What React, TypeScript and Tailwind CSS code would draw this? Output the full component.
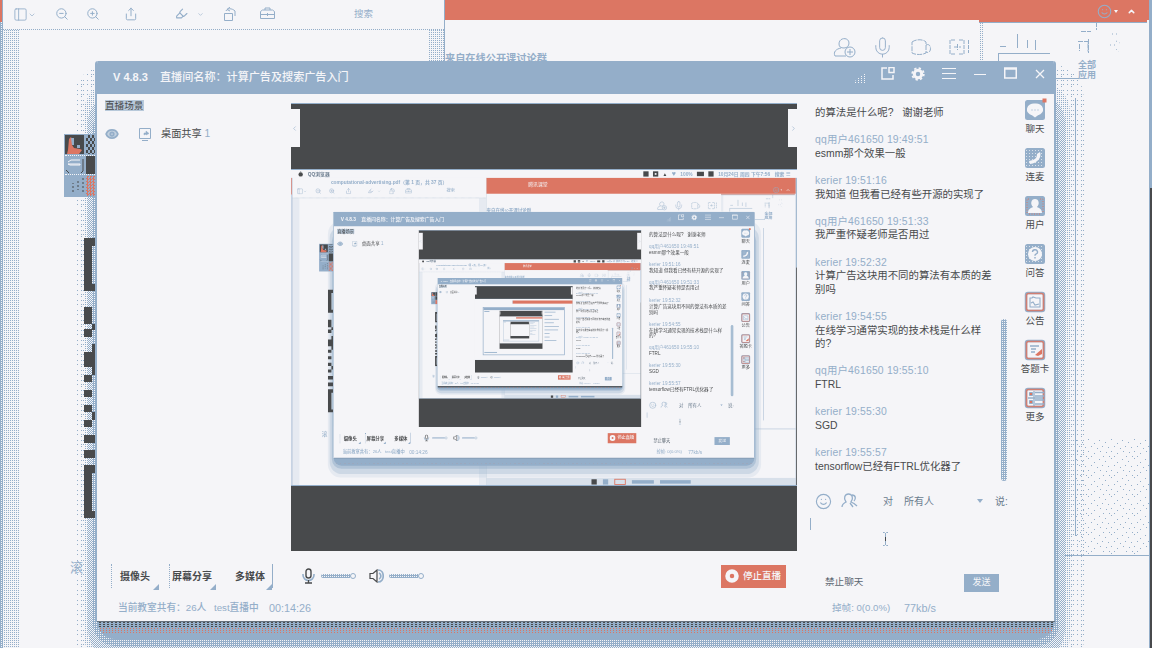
import React from "react";
import {
  ChevronDown, ChevronLeft, ChevronRight, ChevronUp, Eye, Highlighter,
  Mic, PanelLeft, Share, Smile, ZoomIn, ZoomOut,
} from "lucide-react";

const MESSAGES: { from?: string; lines: string[] }[] = [
  { lines: ["的算法是什么呢?   谢谢老师"] },
  { from: "qq用户461650 19:49:51", lines: ["esmm那个效果一般"] },
  { from: "kerier 19:51:16", lines: ["我知道 但我看已经有些开源的实现了"] },
  { from: "qq用户461650 19:51:33", lines: ["我严重怀疑老师是否用过"] },
  { from: "kerier 19:52:32", lines: ["计算广告这块用不同的算法有本质的差", "别吗"] },
  { from: "kerier 19:54:55", lines: ["在线学习通常实现的技术栈是什么样", "的?"] },
  { from: "qq用户461650 19:55:10", lines: ["FTRL"] },
  { from: "kerier 19:55:30", lines: ["SGD"] },
  { from: "kerier 19:55:57", lines: ["tensorflow已经有FTRL优化器了"] },
];

type Tones = { sparse: string; quarter: string; half: string; dense: string };

const FULL: Tones = {
  sparse: "bg-[conic-gradient(#94aec9_0_25%,transparent_0)] bg-[length:5px_5px] [mask-image:conic-gradient(#000_0_25%,transparent_0)] [mask-size:2px_2px]",
  quarter: "bg-[conic-gradient(#94aec9_0_25%,transparent_0)] bg-[length:2px_2px]",
  half: "bg-[repeating-conic-gradient(#94aec9_0_25%,#f5f5f8_0_50%)] bg-[length:2px_2px]",
  dense: "bg-[#94aec9] bg-[image:conic-gradient(#f5f5f8_0_25%,transparent_0)] bg-[length:2px_2px]",
};

const SMALL: Tones = {
  sparse: "",
  quarter: "bg-[#94aec9]/15",
  half: "bg-[#94aec9]/30",
  dense: "bg-[#94aec9]/50",
};

const tones = (depth: number) => (depth === 0 ? FULL : SMALL);

function RailGlyph({ kind }: { kind: number }) {
  return (
    <svg width="20" height="20" viewBox="0 0 20 20" fill="none" overflow="visible">
      {kind < 4 ? (
        <rect width="20" height="20" rx="2.5" fill="#94aec9" />
      ) : (
        <rect x="1" y="1" width="18" height="18" rx="2" fill="#f5f5f8" stroke="#94aec9" strokeWidth="2.5" />
      )}
      {kind >= 4 && <rect x="1.5" y="1.5" width="17" height="17" rx="2" stroke="#dc7663" strokeWidth="1.6" strokeOpacity=".85" />}
      {kind === 0 && (
        <g>
          <path d="M10 3.500a7 6 0 0 1 3 11.700L10 17.500l-3-2.300A7 6 0 0 1 10 3.500Z" fill="#f5f5f8" />
          <path d="M6.5 10h1M9.5 10h1M12.5 10h1" stroke="#94aec9" strokeWidth="1.2" />
          <rect x="17.500" y="-1.500" width="4" height="4" fill="#dc7663" />
        </g>
      )}
      {(kind === 1 || kind === 3) && (
        <path d="M1 2.500h18M1 5.500h18M1 8.500h18M1 11.500h18M1 14.500h18M1 17.500h18" stroke="#f5f5f8" strokeDasharray="1 2" strokeOpacity=".7" />
      )}
      {kind === 1 && <path d="M15 4c2 5-2 11-10 12l-1-3 4-1c3-1 4-3 4-6Z" fill="#f5f5f8" />}
      {kind === 2 && (
        <g>
          <path d="M3 17c0-4 3-5 5-6-3-3-2-8 2-8s5 5 2 8c2 1 5 2 5 6Z" fill="#f5f5f8" />
          <path d="M2 17V3h3M15 3h3v14M4 18h12" stroke="#dc7663" strokeWidth=".9" strokeDasharray="1 1.5" />
        </g>
      )}
      {kind === 3 && (
        <g>
          <circle cx="10" cy="10" r="7" fill="#f5f5f8" />
          <path d="M7.5 8a2.5 2.3 0 1 1 3.4 2.2c-.7.3-.9.8-.9 1.6M10 13v1.4" stroke="#94aec9" strokeWidth="1.4" />
        </g>
      )}
      {kind === 4 && <path d="M5 6h2l1-1 3 1h4v9H5ZM6 11l2-1 2 3 4-1" stroke="#94aec9" strokeWidth="1.1" />}
      {kind === 5 && (
        <g>
          <path d="M5 6h9M6 9h5M6 12h4" stroke="#94aec9" strokeWidth="1.3" />
          <path d="m10 15 7-6v5l-4 2Z" fill="#dc7663" />
        </g>
      )}
      {kind === 6 && (
        <g>
          <path d="M4.500 4.500h3v3h-3ZM4.500 12.500h3v3h-3Z" fill="#dc7663" stroke="#94aec9" />
          <path d="M10 4.500h9M10 8h9M10 12h9M10 16h9M3 10h15M9 3v15" stroke="#94aec9" strokeWidth="1.300" />
        </g>
      )}
    </svg>
  );
}

const RAIL = ["聊天", "连麦", "用户", "问答", "公告", "答题卡", "更多"];

function Slider({ depth }: { depth: number }) {
  return (
    <div className="flex w-[35px] items-center">
      <div className={"h-[4px] flex-1 rounded-l-full " + (depth ? "bg-[#94aec9]/60" : FULL.dense)} />
      <div className="size-[6px] rounded-full border border-[#94aec9] bg-[#f5f5f8]" />
    </div>
  );
}

function Corner() {
  return (
    <svg width="6" height="6" className="absolute right-0 -bottom-[2px]">
      <path d="M6 0v6H0Z" fill="#94aec9" />
    </svg>
  );
}

function TitleBar() {
  return (
    <div className="flex h-[33px] shrink-0 items-center bg-[#94aec9] pl-[16px] text-[#f5f5f8]">
      <span className="w-[47px] text-[11px] font-bold whitespace-nowrap">V 4.8.3</span>
      <span className="flex-1 text-[11.1px] font-medium whitespace-nowrap">直播间名称：计算广告及搜索广告入门</span>
      <div className="flex h-full w-[202px] items-start pt-[6px]">
        <svg width="10" height="10" viewBox="0 0 10 10" className="mt-[6px] ml-[3px]">
          <path d="M.5 10V7.500M3.500 10V5M6.500 10V3M9.500 10V0" stroke="#f5f5f8" strokeDasharray="1 1" />
        </svg>
        <svg width="14" height="14" viewBox="0 0 14 14" className="ml-[16px]" fill="none" stroke="#f5f5f8" strokeWidth="1.5">
          <path d="M6 1H1v11h11V8" />
          <path d="M8 .5h5v5H8Z" />
        </svg>
        <svg width="14" height="14" viewBox="0 0 14 14" className="ml-[16px]" fill="none" stroke="#f5f5f8">
          <circle cx="7" cy="7" r="3.700" strokeWidth="3" />
          <circle cx="7" cy="7" r="5.800" strokeWidth="1.800" strokeDasharray="2.300 2.250" />
        </svg>
        <svg width="15" height="14" viewBox="0 0 15 14" className="ml-[17px]">
          <path d="M0 1.500h14M0 6.500h14M0 11.500h14" stroke="#f5f5f8" strokeWidth="1.2" />
        </svg>
        <svg width="12" height="14" viewBox="0 0 12 14" className="ml-[17px]">
          <path d="M0 7.500h12" stroke="#f5f5f8" strokeWidth="1.2" />
        </svg>
        <svg width="13" height="13" viewBox="0 0 13 13" className="ml-[18px]" fill="none">
          <path d="M.75 1v10h11.500V1ZM0 2h13" stroke="#f5f5f8" strokeWidth="1.5" />
        </svg>
        <svg width="10" height="14" viewBox="0 0 10 14" className="ml-[18px]">
          <path d="m1 3 8 8M9 3l-8 8" stroke="#f5f5f8" strokeWidth="1.3" />
        </svg>
      </div>
    </div>
  );
}

function Chat({ depth }: { depth: number }) {
  return (
    <div className="flex w-[217px] shrink-0 flex-col">
      <div className="flex h-[393px] shrink-0">
        <div className="flex flex-1 flex-col gap-[13.62px] pt-[12px] pl-[18px] text-[10.4px] leading-[13.6px] whitespace-pre">
          {MESSAGES.map((m, i) => (
            <div key={i} className="w-[184px]">
              {m.from && <div className="tracking-[0.18px] text-[#94aec9]">{m.from}</div>}
              {m.lines.map((l) => (
                <div key={l} className="text-[#484a4c]">{l}</div>
              ))}
            </div>
          ))}
        </div>
        <div className={"mt-[225px] mr-[7px] h-[162px] w-[6px] rounded-full " + (depth ? "bg-[#a7bdd2]" : FULL.dense)} />
      </div>
      <div className="flex h-[28px] shrink-0 items-center pl-[18px] text-[10px] text-[#6b7c8e]">
        <Smile size={17} strokeWidth={1.6} color="#94aec9" />
        <svg width="17" height="16" viewBox="0 0 17 16" className="ml-[9px]" fill="none" stroke="#94aec9" strokeWidth="1.300">
          <path d="M1 14c0-3 2-4 4-5C2 5 4 1 7.500 1S13 5 10 9c3 1 4 2 6 4" />
          <path d="M11 2c4 0 4 4 2 6M9 10l3 4" />
        </svg>
        <span className="ml-[25px]">对</span>
        <span className="ml-[11px] w-[73px]">所有人</span>
        <svg width="6" height="4"><path d="M0 0h6L3 4Z" fill="#94aec9" /></svg>
        <span className="ml-[12px] whitespace-nowrap">说:</span>
      </div>
      <div className="flex flex-1 pt-[3px] pl-[13px]">
        <div className="h-[12px] w-px bg-[#94aec9]" />
        <svg width="7" height="14" viewBox="0 0 7 14" className="mt-[14px] ml-[71px]">
          <path d="M1 .5h1.500l1 1 1-1H6M3.500 1v12M1 13.500h1.500l1-1 1 1H6" fill="none" stroke="#94aec9" />
          <path d="M3.500 5v4" stroke="#484a4c" />
        </svg>
      </div>
      <div className="flex h-[29px] shrink-0 items-center pr-[15px] pl-[28px] text-[9.6px]">
        <span className="flex-1 text-[#5b6671]">禁止聊天</span>
        <span className="flex h-[18px] w-[35px] items-center justify-center bg-[#94aec9] text-[9px] text-[#f5f5f8]">发送</span>
      </div>
      <div className="flex h-[24px] shrink-0 items-center pb-[2px] pl-[35px] text-[9.6px] text-[#94aec9]">
        <span className="w-[72px] whitespace-nowrap">掉帧: 0(0.0%)</span>
        <span className="text-[10.8px]">77kb/s</span>
      </div>
    </div>
  );
}

function Stage({ depth }: { depth: number }) {
  return (
    <div className="mt-[9px] flex h-[448px] w-[506px] shrink-0 flex-col bg-[#484a4c]">
      <div className="flex h-[67px] shrink-0 items-start justify-between border-y border-[#94aec9] pt-[5px]">
        <div className="flex h-[38px] w-[9px] items-center bg-[#f5f5f8]"><ChevronLeft size={7} color="#94aec9" /></div>
        <div className="flex h-[38px] w-[9px] items-center justify-end bg-[#f5f5f8]"><ChevronRight size={7} color="#94aec9" /></div>
      </div>
      <div className="h-[316px] w-[506px] shrink-0 overflow-hidden border-b border-[#94aec9] bg-[#f5f5f8]">
        {depth < 4 && (
          <div className="h-[719px] w-[1152px] origin-top-left scale-[0.4393]">
            {depth < 2 ? <Desktop depth={depth + 1} /> : <Thumbnail depth={depth + 1} />}
          </div>
        )}
      </div>
    </div>
  );
}

function Thumbnail({ depth }: { depth: number }) {
  return (
    <div className="flex h-[719px] w-[1152px] flex-col bg-[#f5f5f8]">
      <div className="mt-[18px] flex h-[37px]">
        <div className="w-[445px] border-r-4 border-[#94aec9]" />
        <div className="flex-1 bg-[#dc7663]" />
      </div>
      <div className="mx-[92px] mt-[40px] flex h-[568px] flex-col border-8 border-[#94aec9] bg-[#f5f5f8]">
        <div className="h-[28px] shrink-0 bg-[#94aec9]" />
        <div className="flex flex-1">
          <div className="flex w-[190px] flex-col justify-between pb-[20px] pl-[10px]">
            <div className="mt-[12px] h-[10px] w-[60px] bg-[#94aec9]" />
            <div className="h-[10px] w-[150px] bg-[#94aec9]" />
          </div>
          <Stage depth={depth} />
          <div className="flex flex-1 flex-col gap-[34px] pt-[20px] pl-[24px]">
            {[130, 90, 170, 110, 170, 160, 60, 60, 140].map((w, i) => (
              <div key={i} className="h-[8px] bg-[#94aec9]" style={{ width: w }} />
            ))}
          </div>
        </div>
      </div>
    </div>
  );
}

function Broadcaster({ depth }: { depth: number }) {
  return (
    <div className="flex h-[560px] w-[961px] flex-col overflow-hidden rounded-t-[3px] border-x-2 border-[#94aec9] bg-[#f5f5f8]">
      <TitleBar />
      <div className="flex min-h-0 flex-1">
        <div className="flex w-[700px] shrink-0 flex-col">
          <div className="flex h-[457px] shrink-0">
            <div className="w-[194px] shrink-0 pt-[6px] pl-[8px]">
              <div className="w-[39px] bg-[#b8c9da] text-[9.6px] leading-[11px] whitespace-nowrap text-[#484a4c]">直播场景</div>
              <div className="mt-[15px] flex h-[16px] items-center text-[10.2px]">
                <Eye size={14} strokeWidth={3} color="#94aec9" fill="#c4d2e0" />
                <svg width="12" height="13" viewBox="0 0 12 13" className="ml-[20px]" fill="none" stroke="#94aec9">
                  <path d="M.5.500h11v10H.5ZM3 12.500h6" />
                  <path d="M5 7V5h2V3l3 2.500L7 7V6Z" fill="#94aec9" strokeWidth=".5" />
                </svg>
                <span className="ml-[10px] text-[#484a4c]">桌面共享 <span className="text-[#94aec9]">1</span></span>
              </div>
            </div>
            <Stage depth={depth} />
          </div>
          <div className="flex h-[46px] shrink-0 items-center pt-[4px] pl-[14px] text-[10px] font-bold text-[#484a4c]">
            <div className="relative flex h-[24px] w-[48px] items-center border-l border-dotted border-[#94aec9] pl-[8px] whitespace-nowrap">摄像头<Corner /></div>
            <div className="relative ml-[10px] flex h-[24px] w-[47px] items-center border-l border-dotted border-[#94aec9] pl-[2px] whitespace-nowrap">屏幕分享<Corner /></div>
            <div className="relative flex h-[24px] w-[57px] items-center border-r border-[#94aec9] pl-[19px] whitespace-nowrap">多媒体<Corner /></div>
            <svg width="13" height="16" viewBox="0 0 13 16" className="ml-[29px]" fill="none">
              <path d="M1 6v1a5 5 0 0 0 11 0V6" stroke="#94aec9" strokeWidth="1.600" />
              <rect x="4" y="1" width="5" height="9" rx="2.500" stroke="#484a4c" strokeWidth="1.400" />
              <path d="M6.500 12v3M3 15h7" stroke="#484a4c" strokeWidth="1.300" />
            </svg>
            <div className="ml-[6px]"><Slider depth={depth} /></div>
            <svg width="15" height="14" viewBox="0 0 15 14" className="ml-[13px]" fill="none">
              <path d="M9 1c7 0 7 12 0 12M10 4c2.500 1 2.500 5 0 6" stroke="#94aec9" strokeWidth="1.700" />
              <path d="M1 4.500h3L8 1v12L4 9.500H1Z" stroke="#484a4c" strokeWidth="1.200" />
            </svg>
            <div className="ml-[5px]"><Slider depth={depth} /></div>
            <div className="ml-auto mr-[11px] flex h-[23px] w-[65px] items-center bg-[#dc7663] pl-[4px] text-[9.5px] font-medium text-[#f5f5f8]">
              <svg width="14" height="14"><circle cx="7" cy="7" r="4.500" fill="none" stroke="#f5f5f8" strokeWidth="4.500" /></svg>
              <span className="ml-[4px] whitespace-nowrap">停止直播</span>
            </div>
          </div>
          <div className="flex h-[24px] items-center pb-[2px] pl-[21px] text-[9.7px] font-medium whitespace-nowrap text-[#94aec9]">
            <span className="w-[96px]">当前教室共有：26人</span>
            <span className="w-[55px]">test直播中</span>
            <span className="text-[10.8px]">00:14:26</span>
          </div>
        </div>
        <Chat depth={depth} />
        <div className="flex flex-1 flex-col items-center pt-[6px] pl-[2px]">
          {RAIL.map((label, i) => (
            <div key={label} className="flex h-[48px] flex-col items-center">
              <RailGlyph kind={i} />
              <span className="mt-[2px] text-[9.5px] leading-[14px] whitespace-nowrap text-[#484a4c]">{label}</span>
            </div>
          ))}
        </div>
      </div>
    </div>
  );
}

function MenuBar() {
  return (
    <div className="flex h-[18px] items-center gap-[10px] bg-[#f5f5f8] pr-[16px] pl-[16px] text-[11px] text-[#484a4c]">
      <svg width="12" height="14"><circle cx="6" cy="8" r="5" fill="#484a4c" /><path d="M6 3V0" stroke="#484a4c" /></svg>
      <span className="font-bold text-[#6b7c8e]">QQ浏览器</span>
      <span className="ml-auto size-[12px] bg-[#484a4c]" />
      <span className="size-[12px] border-4 border-[#484a4c]" />
      <span>▲</span><span className="text-[16px] text-[#94aec9]">♥</span>
      <span className="font-bold text-[#94aec9]">100%</span>
      <span className="h-[10px] w-[16px] bg-[#484a4c]" />
      <span className="h-[12px] w-[12px] bg-[#484a4c]" />
      <span className="font-bold text-[#94aec9]">10月24日 周四 下午7:56</span>
      <span className="font-bold text-[#94aec9]">搜索 ☰</span>
    </div>
  );
}

function PdfReader({ depth }: { depth: number }) {
  return (
    <div className="flex h-[700px] w-[443px] shrink-0 flex-col border-x border-[#94aec9] bg-[#f5f5f8]">
      <div className="flex h-[23px] shrink-0 items-center justify-center text-[11px] font-bold text-[#94aec9]">
        {depth > 0 && "computational-advertising.pdf（第 1 页，共 37 页）"}
      </div>
      <div className="flex h-[23px] shrink-0 items-start border-b border-dotted border-[#94aec9] pl-[10px] text-[#94aec9]">
        <PanelLeft size={15} strokeWidth={1.400} /><ChevronDown size={8} className="mt-[4px]" />
        <ZoomOut size={14} strokeWidth={1.700} className="ml-[19px]" />
        <ZoomIn size={14} strokeWidth={1.700} className="ml-[17px]" />
        <Share size={14} strokeWidth={1.700} className="ml-[24px]" />
        <Highlighter size={13} strokeWidth={2} className="ml-[37px]" /><ChevronDown size={7} className="mt-[4px] ml-[9px]" />
        <svg width="13" height="14" viewBox="0 0 13 14" className="ml-[20px]" fill="none" stroke="currentColor">
          <path d="M.5 6.500h8v7h-8ZM2 4C3 1 8 1 11 4v5M6 0l-3 2.500L6 4" />
        </svg>
        <svg width="15" height="13" viewBox="0 0 15 13" className="ml-[23px]" fill="none" stroke="currentColor">
          <path d="M.5 4.500l2-1.500h10l2 1.500v7H.5ZM5 3V1h5v2M.5 7.500h14M7.500 6v3" />
        </svg>
        <span className="ml-auto mr-[71px] text-[9.5px] leading-[13px]">搜索</span>
      </div>
      <div className="flex flex-1">
        <div className={"w-[16px] " + tones(depth).quarter} />
        <div className="flex-1" />
        <div className={"w-[16px] " + tones(depth).quarter} />
      </div>
    </div>
  );
}

function MeetingBackdrop({ depth }: { depth: number }) {
  return (
    <div className="flex h-[700px] flex-1 flex-col bg-[#f5f5f8]">
      <div className="flex h-[36px] shrink-0 items-end bg-[#dc7663] text-[#94aec9]">
        <span className="mb-[14px] ml-[95px] text-[11px] text-[#f5f5f8]">{depth > 0 && "腾讯课堂"}</span>
        <Smile size={15} strokeWidth={1.700} className="mb-[1px] ml-auto" />
        <svg width="4" height="4" className="mb-[6px] ml-[2px]"><path d="M0 0h4L2 3Z" fill="#f5f5f8" /></svg>
        <ChevronUp size={9} strokeWidth={4} className="mr-[13px] mb-[4px] ml-[9px] text-[#f5f5f8]" />
      </div>
      <div className="flex h-[58px] shrink-0 items-start">
        <span className="mt-[31px] w-[388px] text-[10.2px] leading-[16px] font-bold whitespace-nowrap text-[#94aec9]">来自在线公开课讨论群</span>
        <div className="mt-[16px] flex items-center gap-[15px] text-[#94aec9]">
          <svg width="23" height="23" viewBox="0 0 23 23" fill="none" stroke="currentColor">
            <path d="M6 8c0-7 10-7 10-1 0 3-2 5-5 5s-5-1-5-4ZM13 20H2c-2-4 1-7 6-8" />
            <circle cx="17" cy="16" r="5" /><path d="M14 16h6M17 13v6" />
          </svg>
          <Mic size={23} strokeWidth={1} />
          <svg width="24" height="20" viewBox="0 0 24 20" fill="none" stroke="currentColor">
            <path d="M3 4c4-3 11-3 14 0v11c-4 2-10 2-14 0ZM17 7c6-3 6 10 0 7" strokeDasharray="5 1" />
          </svg>
          <svg width="23" height="20" viewBox="0 0 23 20" fill="none" stroke="currentColor">
            <path d="M7 2H2v14h5M11 2h5v14h-5M6 9h7M9.500 6v6M20.500 2v13" strokeDasharray="4 1" />
          </svg>
        </div>
        <div className={"mt-[3px] ml-[8px] h-[38px] w-[5px] " + tones(depth).quarter} />
        <svg width="66" height="42" viewBox="0 0 66 42" fill="none" stroke="#94aec9" overflow="visible" className="shrink-0">
          <path d="M-5 1h168" stroke="#dc7663" strokeWidth="2" />
          <path d="M-5 2.500h168" />
          <path d="M14 33.500h52M16 26.500h6M33.500 14v14M43.500 20v8M51.500 20v10M14.500 34v7" />
        </svg>
        <div className="mt-[12px] ml-[4px] flex w-[66px] shrink-0 flex-col items-center text-[9px] leading-[10px] font-bold text-[#94aec9]">
          <svg width="66" height="28" viewBox="0 0 66 28" fill="none" stroke="#94aec9" overflow="visible">
            <path d="M27 -.5h10M42.500-10v8M24 9.500h10v10M34.500 7v14M25.500 12v7" strokeDasharray="5 1" />
            <path d="M58 2h6M62 9l4 2M56 13h5M62 17l3 3" strokeDasharray="1 3" />
          </svg>
          <span>全部</span>
          <span>应用</span>
        </div>
      </div>
      <div className="ml-[610px] h-px w-[24px] shrink-0 bg-[#94aec9]" />
      <div className="flex h-[477px] shrink-0 justify-end border-b border-[#94aec9]">
        {depth === 0 && (
          <svg width="74" height="115" className="mt-[360px]" fill="#94aec9" shapeRendering="crispEdges">
            <defs>
              <pattern id="grain" width="23" height="19" patternUnits="userSpaceOnUse">
                <path d="M1 1h1v1h-1ZM7 3h1v1h-1ZM13 0h1v1h-1ZM19 4h1v1h-1ZM4 7h1v1h-1ZM10 8h1v1h-1ZM16 7h1v1h-1ZM22 9h1v1h-1ZM2 12h1v1h-1ZM8 13h1v1h-1ZM13 12h1v1h-1ZM19 14h1v1h-1ZM5 17h1v1h-1ZM11 17h1v1h-1ZM16 17h1v1h-1Z" />
              </pattern>
            </defs>
            <rect width="74" height="115" fill="url(#grain)" />
          </svg>
        )}
      </div>
      <div className="flex-1" />
      <div className={"flex h-[17px] items-center justify-center gap-[14px] " + tones(depth).half}>
        <div className="size-[12px] bg-[#484a4c]" />
        <div className="size-[12px] bg-[#94aec9]" />
        <div className="h-[14px] w-[26px] border-2 border-[#dc7663]" />
        <div className="h-[8px] w-[50px] bg-[#94aec9]" />
        <div className="h-[8px] w-[70px] bg-[#94aec9]" />
      </div>
    </div>
  );
}

function Avatars() {
  return (
    <div className="flex w-[34px] flex-col gap-px bg-[#94aec9] p-px">
      <div className="flex h-[19px] gap-[2px]">
        <svg width="19" height="19"><path d="M0 0h19v19H0Z" fill="#484a4c" /><path d="M4 4l2-2 2 4-1 4 2 3 6 1 2 1-3 4H2l1-4Z" fill="#dc7663" /><path d="M6 3h3v7H7ZM12 10h3v3h-3Z" fill="#94aec9" /></svg>
        <div className="w-[11px] bg-[repeating-conic-gradient(#484a4c_0_25%,#94aec9_0_50%)] bg-[length:4px_6px]" />
      </div>
      <div className="flex h-[20px] gap-[2px] border-y border-dotted border-[#f5f5f8]">
        <svg width="19" height="18"><path d="M3 6l3-2h9M3 8h12v1H5Z" fill="none" stroke="#f5f5f8" /><path d="M18 3v12l-2 2M1 14l3 3" fill="none" stroke="#484a4c" /></svg>
        <div className="w-[11px] bg-[#484a4c]" />
      </div>
      <div className="flex h-[20px] gap-[2px]">
        <svg width="19" height="20"><path d="M8 16V7M18 2v14M13 5v9" stroke="#484a4c" strokeDasharray="2 2" /></svg>
        <div className="w-[11px] bg-[repeating-conic-gradient(#dc7663_0_25%,#94aec9_0_50%)] bg-[length:3px_3px]" />
      </div>
    </div>
  );
}

function QrEdge() {
  return (
    <svg width="12" height="280" viewBox="0 0 12 280" fill="#484a4c">
      <path d="M0 0h12v8H8v38h4v7H0Z" />
      <path d="M0 69h8v17H0ZM8 86h4v6H8ZM0 91h8v8H0ZM8 106h4v9H8ZM0 114h12v15H0ZM8 129h4v8H8ZM0 137h8v7H0ZM0 152h8v7H0ZM0 167h8v7H0ZM8 174h4v8H8ZM0 182h8v7H0ZM0 197h12v8H0ZM0 212h12v8H0Z" />
      <path d="M0 227h12v8H8v38h4v7H0Z" />
    </svg>
  );
}

function Desktop({ depth }: { depth: number }) {
  const t = tones(depth);
  return (
    <div className="relative h-[719px] w-[1152px] overflow-hidden bg-[#f5f5f8]">
      {depth > 0 ? <MenuBar /> : <div className="h-[18px]" />}
      <div className="flex">
        <div className="flex w-[2px] shrink-0 flex-col">
          <div className="h-[38px] bg-[#dc7663]" />
          <div className={"flex-1 " + t.dense} />
        </div>
        <PdfReader depth={depth} />
        <MeetingBackdrop depth={depth} />
        <div className="flex w-[3px] shrink-0 flex-col border-l border-[#94aec9]">
          <div className="h-[204px] bg-[#94aec9]" />
          <div className="flex-1 bg-[#484a4c]" />
        </div>
      </div>
      <div className="absolute top-[594px] left-[70px] text-[13px] leading-[16px] text-[#94aec9]">滚</div>
      <div className="absolute top-[132px] left-[1075px] h-[438px] w-px bg-[#94aec9]" />
      <div className={"absolute top-[98px] left-[74px] h-[610px] w-[1010px] rounded-[34px] " + t.sparse} />
      <div className={"absolute top-[116px] left-[84px] h-[584px] w-[986px] rounded-[30px] " + t.quarter} />
      <div className={"absolute top-[128px] left-[88px] h-[564px] w-[977px] rounded-[28px] " + t.half} />
      <div className={"absolute top-[140px] left-[93px] h-[540px] w-[966px] rounded-[22px] " + t.dense} />
      <div className="absolute top-[640px] left-[97px] flex h-[33px] w-[958px] flex-col overflow-hidden rounded-b-[18px] bg-[#94aec9]">
        <div className="mt-[15px] h-px shrink-0 bg-[#484a4c]/60" />
        <div className="h-[6px] shrink-0 bg-[conic-gradient(#484a4c_0_25%,transparent_0)] bg-[length:4px_2px]" />
        <div className="h-[6px] shrink-0 bg-[repeating-linear-gradient(90deg,#dc7663_0_1px,transparent_1px_3px)] [mask-image:repeating-linear-gradient(#000_0_1px,transparent_1px_2px)]" />
      </div>
      <div className="absolute top-[168px] left-[64px]"><Avatars /></div>
      <div className="absolute top-[272px] left-[84px]"><QrEdge /></div>
      <div className="absolute top-[95px] left-[95px]"><Broadcaster depth={depth} /></div>
    </div>
  );
}

export default function App() {
  return (
    <div className="h-[648px] w-[1152px] overflow-hidden font-['Liberation_Sans','Noto_Sans_CJK_SC',sans-serif]">
      <div className="-mt-[34px]">
        <Desktop depth={0} />
      </div>
    </div>
  );
}
